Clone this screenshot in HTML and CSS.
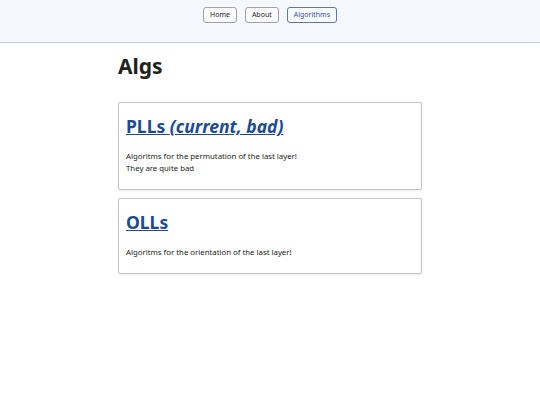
FILE: index.html
```html
<!DOCTYPE html>
<html>
<head>
<meta charset="utf-8">
<link rel="stylesheet" href="styles.css">
</head>
<body>
<header class="top">
  <nav class="nav">
    <a class="btn" href="#">Home</a>
    <a class="btn" href="#">About</a>
    <a class="btn active" href="#">Algorithms</a>
  </nav>
</header>
<main class="main">
  <h1 class="title">Algs</h1>
  <section class="card">
    <h2 class="card-title"><a href="#">PLLs <em>(current, bad)</em></a></h2>
    <p class="card-text">Algoritms for the permutation of the last layer!<br>They are quite bad</p>
  </section>
  <section class="card">
    <h2 class="card-title"><a href="#">OLLs</a></h2>
    <p class="card-text">Algoritms for the orientation of the last layer!</p>
  </section>
</main>
</body>
</html>
```
FILE: styles.css
```css
html, body { margin: 0; padding: 0; background: #fff; }
body { font-family: "Noto Sans", "Open Sans", sans-serif; color: #222; }
.top {
  background: #f5f8ff;
  border-bottom: 1px solid #c8c8d0;
  height: 43px;
  box-sizing: border-box;
  padding-top: 7px;
}
.nav { display: flex; justify-content: center; gap: 8px; }
.btn {
  display: block;
  height: 16px;
  box-sizing: border-box;
  line-height: 14px;
  padding: 0 6px;
  font-size: 7px;
  color: #222;
  text-decoration: none;
  border: 1px solid #a0a0a8;
  border-radius: 3px;
  background: #fbfcff;
}
.btn.active { color: #2a4fa0; border-color: #5a78b8; }
.main { width: 304px; margin: 0 auto; }
.title { font-size: 21px; font-weight: 700; margin: 8px 0 21px; line-height: 30px; }
.card {
  border: 1px solid #c4c4c8;
  border-radius: 2px;
  box-shadow: 0 1px 2px rgba(0,0,0,0.08);
  padding: 8px 7px 15px;
  margin-bottom: 8px;
}
.card-title { margin: 0 0 9px; font-size: 17.5px; font-weight: 700; line-height: 30px; }
.card-title a { color: #1c4a94; }
.card-text { margin: 0; font-size: 7.8px; line-height: 12px; color: #222; }
```
